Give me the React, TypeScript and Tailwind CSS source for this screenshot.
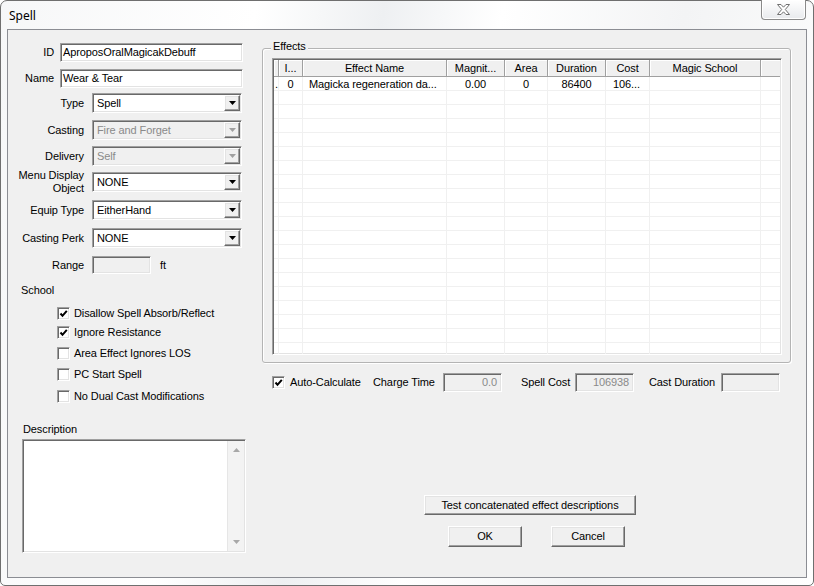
import React from 'react';

const sunken =
  'border border-t-[#a0a0a0] border-l-[#a0a0a0] border-r-white border-b-white shadow-[inset_1px_1px_0_#696969,inset_-1px_-1px_0_#e3e3e3]';
const raised =
  'border border-t-white border-l-white border-r-[#696969] border-b-[#696969] shadow-[inset_-1px_-1px_0_#a0a0a0,inset_1px_1px_0_#e3e3e3]';

const Arrow: React.FC<{ color: string }> = ({ color }) => (
  <svg width="7" height="4" viewBox="0 0 7 4">
    <polygon points="0,0 7,0 3.5,4" fill={color} />
  </svg>
);

interface SelectProps {
  value: string;
  disabled?: boolean;
}

const Select: React.FC<SelectProps> = ({ value, disabled }) => (
  <div className={`h-[20px] w-[150px] p-px flex ${sunken} ${disabled ? 'bg-[#f0f0f0]' : 'bg-white'}`}>
    <span className={`flex-1 pl-[3px] leading-[16px] ${disabled ? 'text-[#8a8a8a]' : 'text-black'}`}>{value}</span>
    <div className={`w-[16px] h-full flex items-center justify-center bg-[#f0f0f0] ${raised}`}>
      <Arrow color={disabled ? '#a0a0a0' : '#000'} />
    </div>
  </div>
);

const CheckBox: React.FC<{ checked?: boolean }> = ({ checked }) => (
  <div className={`w-[13px] h-[13px] bg-white flex items-center justify-center ${sunken}`}>
    {checked && (
      <svg width="9" height="9" viewBox="0 0 9 9">
        <polyline points="1.5,4.5 3.5,6.8 7.8,1.8" fill="none" stroke="#000" strokeWidth="2" />
      </svg>
    )}
  </div>
);

const FieldRow: React.FC<{ label: React.ReactNode; mt: string; h: string; children: React.ReactNode }> = ({
  label,
  mt,
  h,
  children,
}) => (
  <div className={`flex items-center ${mt} ${h}`}>
    <div className="w-[76px] text-right leading-[13px]">{label}</div>
    <div className="ml-[8px]">{children}</div>
  </div>
);

const checks = [
  { label: 'Disallow Spell Absorb/Reflect', checked: true, mt: 'mt-[10px]' },
  { label: 'Ignore Resistance', checked: true, mt: 'mt-[6px]' },
  { label: 'Area Effect Ignores LOS', checked: false, mt: 'mt-[8px]' },
  { label: 'PC Start Spell', checked: false, mt: 'mt-[8px]' },
  { label: 'No Dual Cast Modifications', checked: false, mt: 'mt-[9px]' },
];

const columns = [
  { title: '', w: 'w-[5px]' },
  { title: 'I...', w: 'w-[24px]' },
  { title: 'Effect Name', w: 'w-[144px]' },
  { title: 'Magnit...', w: 'w-[58px]' },
  { title: 'Area', w: 'w-[43px]' },
  { title: 'Duration', w: 'w-[58px]' },
  { title: 'Cost', w: 'w-[44px]' },
  { title: 'Magic School', w: 'w-[111px]' },
];

const firstRow = [
  { text: '.', align: 'text-left pl-px' },
  { text: '0', align: 'text-center' },
  { text: 'Magicka regeneration da...', align: 'text-left pl-[6px]' },
  { text: '0.00', align: 'text-center' },
  { text: '0', align: 'text-center' },
  { text: '86400', align: 'text-center' },
  { text: '106...', align: 'text-left pl-[7px]' },
  { text: '', align: '' },
];

const EffectsTable: React.FC = () => (
  <div className={`ml-[9px] mt-[9px] w-[510px] h-[297px] p-px bg-white overflow-hidden ${sunken}`}>
    <div className="flex h-[17px] border-b border-[#a0a0a0] bg-[#f0f0f0]">
      {columns.map((c, i) => (
        <div
          key={i}
          className={`${c.w} shrink-0 border-r border-[#a0a0a0] shadow-[inset_1px_1px_0_#ffffff] text-center leading-[17px] whitespace-nowrap overflow-hidden`}
        >
          {c.title}
        </div>
      ))}
      <div className="flex-1 shadow-[inset_1px_1px_0_#ffffff]" />
    </div>
    {Array.from({ length: 20 }).map((_, r) => (
      <div key={r} className="flex h-[14px] border-b border-[#f0f0f0]">
        {columns.map((c, i) => (
          <div
            key={i}
            className={`${c.w} shrink-0 border-r border-[#f0f0f0] leading-[14px] whitespace-nowrap overflow-hidden ${
              r === 0 ? firstRow[i].align : ''
            }`}
          >
            {r === 0 ? firstRow[i].text : ''}
          </div>
        ))}
        <div className="flex-1" />
      </div>
    ))}
  </div>
);

const Button: React.FC<{ w: string; h: string; className?: string; children: React.ReactNode }> = ({
  w,
  h,
  className,
  children,
}) => (
  <div className={`${w} ${h} ${className ?? ''} bg-[#f0f0f0] flex items-center justify-center ${raised}`}>
    {children}
  </div>
);

const GrayBox: React.FC<{ value?: string }> = ({ value }) => (
  <div className={`w-[59px] h-[19px] bg-[#f0f0f0] text-right pr-[4px] leading-[17px] text-[#8a8a8a] ${sunken}`}>
    {value}
  </div>
);

export default function App() {
  return (
    <div className="w-[814px] h-[586px] flex flex-col border border-[#6f6f6f] rounded-t-[7px] rounded-b-[5px] px-[6px] pb-[7px] bg-[linear-gradient(100deg,#f6f7f8_0%,#ffffff_28%,#eef0f2_42%,#ffffff_55%,#f3f4f5_75%,#ffffff_100%)] font-['Liberation_Sans',Arial,sans-serif] text-[11px] tracking-[-0.1px] text-black">
      {/* title bar */}
      <div className="h-[28px] flex items-start justify-between">
        <span className="pl-[2px] pt-[7px] text-[12px] leading-[16px] tracking-normal font-['Noto_Sans','Liberation_Sans',sans-serif]">
          Spell
        </span>
        <div className="mt-[-1px] mr-[1px] w-[45px] h-[20px] border border-[#8a8a8a] border-t-0 rounded-b-[4px] bg-[linear-gradient(#ffffff,#e8eaed)] shadow-[inset_0_0_0_1px_#ffffff] flex items-center justify-center">
          <svg width="13" height="11" viewBox="0 0 13 11">
            <polygon
              points="0.5,0.5 4,0.5 6.5,3.2 9,0.5 12.5,0.5 8.3,5.5 12.5,10.5 9,10.5 6.5,7.8 4,10.5 0.5,10.5 4.7,5.5"
              fill="#ffffff"
              stroke="#707070"
              strokeWidth="1"
              strokeLinejoin="round"
            />
          </svg>
        </div>
      </div>

      {/* client area */}
      <div className="h-[549px] border border-[#8b8d93] bg-[#f0f0f0] flex">
        {/* left column */}
        <div className="w-[254px] flex flex-col">
          <div className="flex items-center mt-[13px] h-[19px]">
            <div className="w-[46px] text-right">ID</div>
            <div className={`ml-[6px] w-[183px] h-[19px] bg-white pl-[2px] leading-[17px] ${sunken}`}>
              AproposOralMagicakDebuff
            </div>
          </div>
          <div className="flex items-center mt-[7px] h-[19px]">
            <div className="w-[46px] text-right">Name</div>
            <div className={`ml-[6px] w-[183px] h-[19px] bg-white pl-[2px] leading-[17px] ${sunken}`}>
              Wear &amp; Tear
            </div>
          </div>
          <FieldRow label="Type" mt="mt-[5px]" h="h-[20px]">
            <Select value="Spell" />
          </FieldRow>
          <FieldRow label="Casting" mt="mt-[7px]" h="h-[20px]">
            <Select value="Fire and Forget" disabled />
          </FieldRow>
          <FieldRow label="Delivery" mt="mt-[6px]" h="h-[20px]">
            <Select value="Self" disabled />
          </FieldRow>
          <FieldRow
            label={
              <>
                Menu Display
                <br />
                Object
              </>
            }
            mt="mt-[6px]"
            h="h-[20px]"
          >
            <Select value="NONE" />
          </FieldRow>
          <FieldRow label="Equip Type" mt="mt-[8px]" h="h-[20px]">
            <Select value="EitherHand" />
          </FieldRow>
          <FieldRow label="Casting Perk" mt="mt-[8px]" h="h-[20px]">
            <Select value="NONE" />
          </FieldRow>
          <FieldRow label="Range" mt="mt-[8px]" h="h-[18px]">
            <div className="flex items-center">
              <div className={`w-[59px] h-[18px] bg-[#f0f0f0] ${sunken}`} />
              <span className="ml-[9px]">ft</span>
            </div>
          </FieldRow>

          <div className="mt-[10px] h-[13px] leading-[13px] ml-[13px]">School</div>
          {checks.map((c) => (
            <div key={c.label} className={`flex items-center h-[13px] ml-[49px] ${c.mt}`}>
              <CheckBox checked={c.checked} />
              <span className="ml-[4px] leading-[13px]">{c.label}</span>
            </div>
          ))}

          <div className="mt-[20px] h-[13px] leading-[13px] ml-[15px]">Description</div>
          <div className={`mt-[3px] ml-[14px] w-[224px] h-[114px] p-px bg-white flex justify-end ${sunken}`}>
            <div className="w-[17px] h-full bg-[#f3f3f3] border-l border-[#e6e6e6] flex flex-col items-center justify-between py-[7px]">
              <svg width="7" height="4" viewBox="0 0 7 4">
                <polygon points="0,4 7,4 3.5,0" fill="#a8a8a8" />
              </svg>
              <svg width="7" height="4" viewBox="0 0 7 4">
                <polygon points="0,0 7,0 3.5,4" fill="#a8a8a8" />
              </svg>
            </div>
          </div>
        </div>

        {/* right column */}
        <div className="flex flex-col pt-[18px]">
          <div className="relative w-[529px] h-[315px] border border-[#b4b4b4] rounded-[3px] shadow-[inset_1px_1px_0_#ffffff,1px_1px_0_#ffffff]">
            <span className="absolute left-[8px] top-[-9px] px-[2px] bg-[#f0f0f0] leading-[13px]">Effects</span>
            <EffectsTable />
          </div>

          <div className="mt-[10px] h-[19px] flex items-center">
            <div className="w-[111px] pl-[10px] flex items-center">
              <CheckBox checked />
              <span className="ml-[5px]">Auto-Calculate</span>
            </div>
            <div className="w-[70px]">Charge Time</div>
            <GrayBox value="0.0" />
            <div className="w-[73px] pl-[19px]">Spell Cost</div>
            <GrayBox value="106938" />
            <div className="w-[87px] pl-[15px]">Cast Duration</div>
            <GrayBox />
          </div>

          <Button w="w-[212px]" h="h-[20px]" className="mt-[103px] ml-[162px]">
            Test concatenated effect descriptions
          </Button>
          <div className="mt-[11px] ml-[186px] flex">
            <Button w="w-[74px]" h="h-[21px]">
              OK
            </Button>
            <Button w="w-[74px]" h="h-[21px]" className="ml-[29px]">
              Cancel
            </Button>
          </div>
        </div>
      </div>
    </div>
  );
}
